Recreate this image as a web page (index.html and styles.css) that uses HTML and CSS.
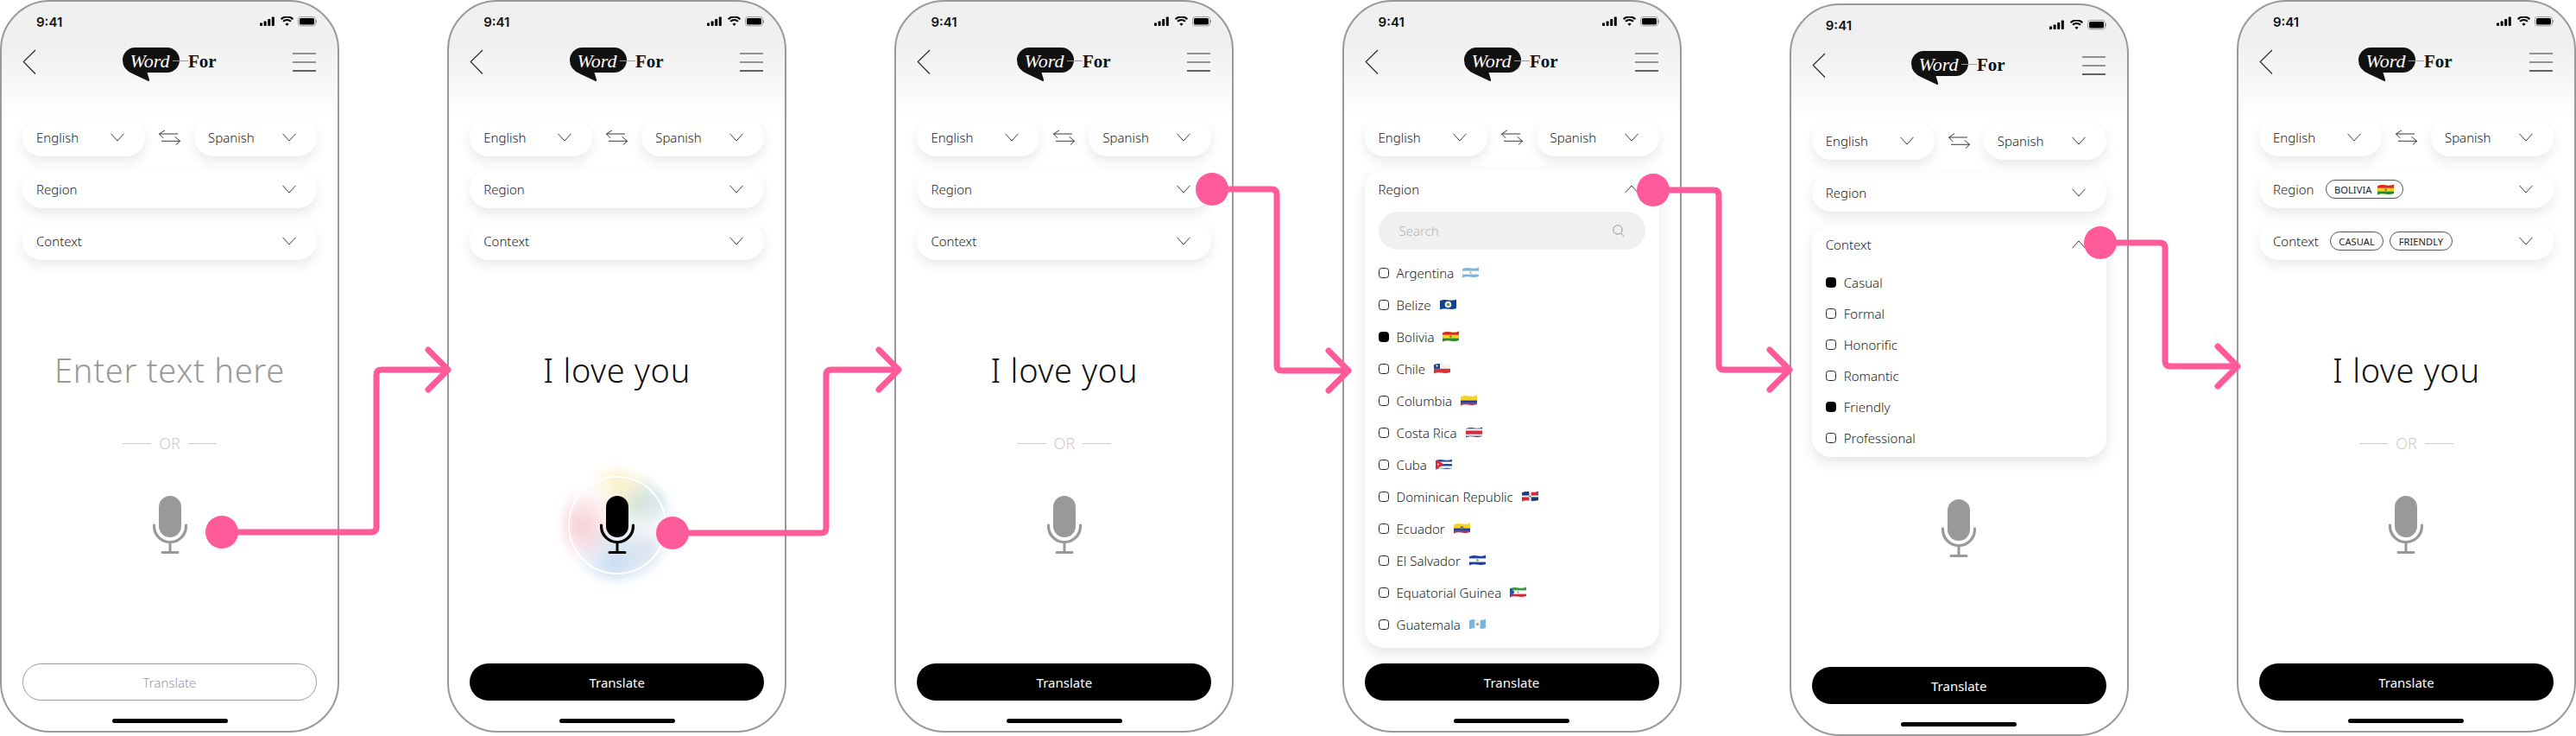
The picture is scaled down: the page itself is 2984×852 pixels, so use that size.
FILE: index.html
```html
<!DOCTYPE html>
<html lang="en">
<head>
  <meta charset="UTF-8" />
  <title>WordFor - translate flow</title>
  <link rel="stylesheet" href="styles.css">
</head>
<body>
  <!-- shared icons -->
  <svg class="sprite" width="0" height="0">
    <defs>
      <clipPath id="wave"><path d="M0 2.2Q5 .2 10 1.4T19 .6V11Q14 12.6 9 11.6T0 12.4Z"/></clipPath>
      <symbol id="status" viewBox="0 0 66 12">
        <rect x="0" y="7.5" width="3" height="3.5" rx=".7"/><rect x="4.600" y="5.500" width="3" height="5.500" rx=".7"/><rect x="9.200" y="3" width="3" height="8" rx=".7"/><rect x="13.800" y=".5" width="3" height="10.500" rx=".7"/>
        <path d="M31.500 11l-2-2.300a3 3 0 0 1 4 0zM27.700 6.600l-1.400-1.500a7.700 7.700 0 0 1 10.400 0l-1.400 1.500a5.700 5.700 0 0 0-7.600 0zM25.400 4l-1.500-1.600a11 11 0 0 1 15.200 0l-1.500 1.600a8.900 8.900 0 0 0-12.200 0z"/>
        <rect x="44.500" y=".5" width="20" height="10.400" rx="3" fill="none" stroke="#999"/><rect x="46" y="2" width="17" height="7.400" rx="1.600"/><rect x="65" y="4" width="1" height="3.400" rx=".5" fill="#999"/>
      </symbol>
      <symbol id="back" viewBox="0 0 16 30"><path d="M15 1L1.200 14.500 15 28.500" fill="none" stroke="#222" stroke-width="1.100"/></symbol>
      <symbol id="menu" viewBox="0 0 27 22"><path d="M0 1h27M0 11h27" fill="none" stroke="#333" stroke-width="1"/><path d="M0 21h27" fill="none" stroke="#222" stroke-width="1.400"/></symbol>
      <symbol id="chevron" viewBox="0 0 16 10"><path d="M.5 .8L8 9 15.500 .8" fill="none" stroke="#222" stroke-width=".9"/></symbol>
      <symbol id="chevron-up" viewBox="0 0 16 10"><path d="M.5 9.200L8 1 15.500 9.200" fill="none" stroke="#222" stroke-width=".9"/></symbol>
      <symbol id="swap" viewBox="0 0 27 18"><path d="M23 5H1.500M8 .8L1.500 5 6 9.800M4 13.300H25.500M19.500 8.200l6 5.100-4.500 4.200" fill="none" stroke="#222" stroke-width=".9"/></symbol>
      <symbol id="search" viewBox="0 0 14 15"><circle cx="6" cy="6" r="5.200" fill="none" stroke="#999"/><path d="M9.800 10L13.400 14" fill="none" stroke="#999"/></symbol>
      <symbol id="mic" viewBox="0 0 40 68">
        <rect x="7" y="0" width="26" height="48" rx="13"/>
        <path d="M1.500 35a18.500 18.500 0 0 0 37 0" fill="none" stroke="currentColor" stroke-width="3.200" stroke-linecap="round"/>
        <path d="M1.500 35v-1M38.500 35v-1" stroke="currentColor" stroke-width="3.200" stroke-linecap="round"/>
        <path d="M20 54v11M11 65.500h18" fill="none" stroke="currentColor" stroke-width="3" stroke-linecap="round"/>
      </symbol>
      <symbol id="logo" viewBox="0 0 110 41">
        <path fill="#111" d="M14.500 0H51.500a14.500 14.500 0 0 1 0 29H28.500l2.600 8.500q.3 2-1.600 1.200L12 30.400Q0 25.500 0 14.500A14.500 14.500 0 0 1 14.500 0Z"/>
        <path d="M58 15.500H76" stroke="#999" stroke-width="1"/>
        <text x="8.500" y="22.500" class="logo-word">Word</text>
        <text x="76" y="22.500" class="logo-for">For</text>
      </symbol>
      <symbol id="ar" viewBox="0 0 19 13"><g clip-path="url(#wave)"><rect width="19" height="13" fill="#fff"/><rect width="19" height="4.600" fill="#7db4e0"/><rect y="8.600" width="19" height="4.400" fill="#7db4e0"/><circle cx="9.500" cy="6.500" r="1.300" fill="#f0b040"/></g></symbol>
      <symbol id="bz" viewBox="0 0 19 13"><g clip-path="url(#wave)"><rect width="19" height="13" fill="#c8202c"/><rect y="1.400" width="19" height="10.200" fill="#12428e"/><circle cx="9.500" cy="6.500" r="3.800" fill="#e4efe4"/><circle cx="9.500" cy="6.500" r="1.800" fill="#6f9a5a"/></g></symbol>
      <symbol id="bo" viewBox="0 0 19 13"><g clip-path="url(#wave)"><rect width="19" height="13" fill="#f4d21f"/><rect width="19" height="4.600" fill="#d8262c"/><rect y="8.600" width="19" height="4.400" fill="#1f8a3c"/><circle cx="9.500" cy="6.500" r="1.200" fill="#6c7a2c"/></g></symbol>
      <symbol id="cl" viewBox="0 0 19 13"><g clip-path="url(#wave)"><rect width="19" height="13" fill="#f4f4f4"/><rect y="6.800" width="19" height="6.200" fill="#d8323a"/><rect width="7" height="6.800" fill="#1c3f94"/><circle cx="3.500" cy="3.600" r="1.100" fill="#fff"/></g></symbol>
      <symbol id="co" viewBox="0 0 19 13"><g clip-path="url(#wave)"><rect width="19" height="6.500" fill="#f6d32a"/><rect y="6.500" width="19" height="3.300" fill="#24409a"/><rect y="9.800" width="19" height="3.200" fill="#c8283a"/></g></symbol>
      <symbol id="cr" viewBox="0 0 19 13"><g clip-path="url(#wave)"><rect width="19" height="13" fill="#fff"/><rect width="19" height="2.400" fill="#1e3f94"/><rect y="4.500" width="19" height="4.200" fill="#d8283a"/><rect y="10.600" width="19" height="2.400" fill="#1e3f94"/></g></symbol>
      <symbol id="cu" viewBox="0 0 19 13"><g clip-path="url(#wave)"><rect width="19" height="13" fill="#fff"/><rect y="1" width="19" height="2.600" fill="#1f4ba8"/><rect y="6" width="19" height="2.500" fill="#1f4ba8"/><rect y="10.800" width="19" height="2.200" fill="#1f4ba8"/><path d="M0 0L9.500 6.500 0 13Z" fill="#d8283a"/><circle cx="3" cy="6.500" r="1" fill="#fff"/></g></symbol>
      <symbol id="do" viewBox="0 0 19 13"><g clip-path="url(#wave)"><rect width="19" height="13" fill="#fff"/><rect width="8.400" height="5.600" fill="#1a3a78"/><rect x="10.600" width="8.400" height="5.600" fill="#cf2a3c"/><rect y="7.400" width="8.400" height="5.600" fill="#cf2a3c"/><rect x="10.600" y="7.400" width="8.400" height="5.600" fill="#1a3a78"/><circle cx="9.500" cy="6.500" r="1" fill="#3d6a4a"/></g></symbol>
      <symbol id="ec" viewBox="0 0 19 13"><g clip-path="url(#wave)"><rect width="19" height="6.500" fill="#f6d32a"/><rect y="6.500" width="19" height="3.300" fill="#24409a"/><rect y="9.800" width="19" height="3.200" fill="#c8283a"/><circle cx="9.500" cy="6" r="2" fill="#6a7a5a"/></g></symbol>
      <symbol id="sv" viewBox="0 0 19 13"><g clip-path="url(#wave)"><rect width="19" height="13" fill="#fff"/><rect width="19" height="4.400" fill="#1c3fa0"/><rect y="8.600" width="19" height="4.400" fill="#1c3fa0"/><circle cx="9.500" cy="6.500" r="1.200" fill="#7a9a50"/></g></symbol>
      <symbol id="gq" viewBox="0 0 19 13"><g clip-path="url(#wave)"><rect width="19" height="13" fill="#fff"/><rect width="19" height="4.400" fill="#3a9a3c"/><rect y="8.600" width="19" height="4.400" fill="#d8283a"/><path d="M0 0L5.500 6.500 0 13Z" fill="#1c58b0"/><circle cx="9.500" cy="6.500" r="1" fill="#8a9a70"/></g></symbol>
      <symbol id="gt" viewBox="0 0 19 13"><g clip-path="url(#wave)"><rect width="19" height="13" fill="#f4f6f4"/><rect width="6.300" height="13" fill="#7db4dc"/><rect x="12.700" width="6.300" height="13" fill="#7db4dc"/><circle cx="9.500" cy="6.500" r="1.500" fill="#88a870"/></g></symbol>
    </defs>
  </svg>

  <div class="board">

    <!-- 1: empty -->
    <section class="phone">
      <div class="status"><span class="time">9:41</span><svg class="status-icons"><use href="#status"/></svg></div>
      <div class="nav">
        <svg class="icon-back"><use href="#back"/></svg>
        <svg class="logo"><use href="#logo"/></svg>
        <svg class="icon-menu"><use href="#menu"/></svg>
      </div>
      <div class="lang-row">
        <div class="pill"><span>English</span><svg class="chevron"><use href="#chevron"/></svg></div>
        <svg class="swap"><use href="#swap"/></svg>
        <div class="pill"><span>Spanish</span><svg class="chevron"><use href="#chevron"/></svg></div>
      </div>
      <div class="pill"><span>Region</span><svg class="chevron"><use href="#chevron"/></svg></div>
      <div class="pill"><span>Context</span><svg class="chevron"><use href="#chevron"/></svg></div>
      <div class="phrase phrase-empty">Enter text here</div>
      <div class="or"><i></i><span>OR</span><i></i></div>
      <div class="mic"><svg class="mic-icon"><use href="#mic"/></svg></div>
      <div class="translate translate-off">Translate</div>
      <div class="home"></div>
    </section>

    <!-- 2: listening -->
    <section class="phone">
      <div class="status"><span class="time">9:41</span><svg class="status-icons"><use href="#status"/></svg></div>
      <div class="nav">
        <svg class="icon-back"><use href="#back"/></svg>
        <svg class="logo"><use href="#logo"/></svg>
        <svg class="icon-menu"><use href="#menu"/></svg>
      </div>
      <div class="lang-row">
        <div class="pill"><span>English</span><svg class="chevron"><use href="#chevron"/></svg></div>
        <svg class="swap"><use href="#swap"/></svg>
        <div class="pill"><span>Spanish</span><svg class="chevron"><use href="#chevron"/></svg></div>
      </div>
      <div class="pill"><span>Region</span><svg class="chevron"><use href="#chevron"/></svg></div>
      <div class="pill"><span>Context</span><svg class="chevron"><use href="#chevron"/></svg></div>
      <div class="phrase">I love you</div>
      <div class="or or-hidden"><i></i><span>OR</span><i></i></div>
      <div class="mic mic-on">
        <div class="mic-glow"></div>
        <div class="mic-ring"></div>
        <svg class="mic-icon"><use href="#mic"/></svg>
      </div>
      <div class="translate">Translate</div>
      <div class="home"></div>
    </section>

    <!-- 3: text entered -->
    <section class="phone">
      <div class="status"><span class="time">9:41</span><svg class="status-icons"><use href="#status"/></svg></div>
      <div class="nav">
        <svg class="icon-back"><use href="#back"/></svg>
        <svg class="logo"><use href="#logo"/></svg>
        <svg class="icon-menu"><use href="#menu"/></svg>
      </div>
      <div class="lang-row">
        <div class="pill"><span>English</span><svg class="chevron"><use href="#chevron"/></svg></div>
        <svg class="swap"><use href="#swap"/></svg>
        <div class="pill"><span>Spanish</span><svg class="chevron"><use href="#chevron"/></svg></div>
      </div>
      <div class="pill"><span>Region</span><svg class="chevron"><use href="#chevron"/></svg></div>
      <div class="pill"><span>Context</span><svg class="chevron"><use href="#chevron"/></svg></div>
      <div class="phrase">I love you</div>
      <div class="or"><i></i><span>OR</span><i></i></div>
      <div class="mic"><svg class="mic-icon"><use href="#mic"/></svg></div>
      <div class="translate">Translate</div>
      <div class="home"></div>
    </section>

    <!-- 4: region open -->
    <section class="phone">
      <div class="status"><span class="time">9:41</span><svg class="status-icons"><use href="#status"/></svg></div>
      <div class="nav">
        <svg class="icon-back"><use href="#back"/></svg>
        <svg class="logo"><use href="#logo"/></svg>
        <svg class="icon-menu"><use href="#menu"/></svg>
      </div>
      <div class="lang-row">
        <div class="pill"><span>English</span><svg class="chevron"><use href="#chevron"/></svg></div>
        <svg class="swap"><use href="#swap"/></svg>
        <div class="pill"><span>Spanish</span><svg class="chevron"><use href="#chevron"/></svg></div>
      </div>
      <div class="card card-region">
        <div class="card-head"><span>Region</span><svg class="chevron"><use href="#chevron-up"/></svg></div>
        <div class="search"><span>Search</span><svg class="search-icon"><use href="#search"/></svg></div>
        <ul class="options">
          <li><b class="check"></b>Argentina<svg class="flag"><use href="#ar"/></svg></li>
          <li><b class="check"></b>Belize<svg class="flag"><use href="#bz"/></svg></li>
          <li><b class="check on"></b>Bolivia<svg class="flag"><use href="#bo"/></svg></li>
          <li><b class="check"></b>Chile<svg class="flag"><use href="#cl"/></svg></li>
          <li><b class="check"></b>Columbia<svg class="flag"><use href="#co"/></svg></li>
          <li><b class="check"></b>Costa Rica<svg class="flag"><use href="#cr"/></svg></li>
          <li><b class="check"></b>Cuba<svg class="flag"><use href="#cu"/></svg></li>
          <li><b class="check"></b>Dominican Republic<svg class="flag"><use href="#do"/></svg></li>
          <li><b class="check"></b>Ecuador<svg class="flag"><use href="#ec"/></svg></li>
          <li><b class="check"></b>El Salvador<svg class="flag"><use href="#sv"/></svg></li>
          <li><b class="check"></b>Equatorial Guinea<svg class="flag"><use href="#gq"/></svg></li>
          <li><b class="check"></b>Guatemala<svg class="flag"><use href="#gt"/></svg></li>
        </ul>
      </div>
      <div class="translate">Translate</div>
      <div class="home"></div>
    </section>

    <!-- 5: context open -->
    <section class="phone phone-low">
      <div class="status"><span class="time">9:41</span><svg class="status-icons"><use href="#status"/></svg></div>
      <div class="nav">
        <svg class="icon-back"><use href="#back"/></svg>
        <svg class="logo"><use href="#logo"/></svg>
        <svg class="icon-menu"><use href="#menu"/></svg>
      </div>
      <div class="lang-row">
        <div class="pill"><span>English</span><svg class="chevron"><use href="#chevron"/></svg></div>
        <svg class="swap"><use href="#swap"/></svg>
        <div class="pill"><span>Spanish</span><svg class="chevron"><use href="#chevron"/></svg></div>
      </div>
      <div class="pill"><span>Region</span><svg class="chevron"><use href="#chevron"/></svg></div>
      <div class="card card-context">
        <div class="card-head"><span>Context</span><svg class="chevron"><use href="#chevron-up"/></svg></div>
        <ul class="options">
          <li><b class="check on"></b>Casual</li>
          <li><b class="check"></b>Formal</li>
          <li><b class="check"></b>Honorific</li>
          <li><b class="check"></b>Romantic</li>
          <li><b class="check on"></b>Friendly</li>
          <li><b class="check"></b>Professional</li>
        </ul>
      </div>
      <div class="mic"><svg class="mic-icon"><use href="#mic"/></svg></div>
      <div class="translate">Translate</div>
      <div class="home"></div>
    </section>

    <!-- 6: filters chosen -->
    <section class="phone">
      <div class="status"><span class="time">9:41</span><svg class="status-icons"><use href="#status"/></svg></div>
      <div class="nav">
        <svg class="icon-back"><use href="#back"/></svg>
        <svg class="logo"><use href="#logo"/></svg>
        <svg class="icon-menu"><use href="#menu"/></svg>
      </div>
      <div class="lang-row">
        <div class="pill"><span>English</span><svg class="chevron"><use href="#chevron"/></svg></div>
        <svg class="swap"><use href="#swap"/></svg>
        <div class="pill"><span>Spanish</span><svg class="chevron"><use href="#chevron"/></svg></div>
      </div>
      <div class="pill"><span>Region<em class="chip">BOLIVIA<svg class="flag"><use href="#bo"/></svg></em></span><svg class="chevron"><use href="#chevron"/></svg></div>
      <div class="pill"><span>Context<em class="chip">CASUAL</em><em class="chip">FRIENDLY</em></span><svg class="chevron"><use href="#chevron"/></svg></div>
      <div class="phrase">I love you</div>
      <div class="or"><i></i><span>OR</span><i></i></div>
      <div class="mic"><svg class="mic-icon"><use href="#mic"/></svg></div>
      <div class="translate">Translate</div>
      <div class="home"></div>
    </section>

    <!-- pink flow arrows sit on top of the phones -->
    <svg class="flow" width="2984" height="852" viewBox="0 0 2984 852">
      <g class="flow-line">
        <path d="M257 616H430q6 0 6-6V434q0-6 6-6H519M496 405l23 23-23 23"/>
        <path d="M779 617H951q6 0 6-6V434q0-6 6-6H1041M1018 405l23 23-23 23"/>
        <path d="M1404 219H1473q6 0 6 6V423q0 6 6 6H1562M1539 406l23 23-23 23"/>
        <path d="M1915 220H1985q6 0 6 6V422q0 6 6 6H2073M2050 405l23 23-23 23"/>
        <path d="M2433 281H2502q6 0 6 6V418q0 6 6 6H2592M2569 401l23 23-23 23"/>
      </g>
      <g class="flow-dot">
        <circle cx="257" cy="616" r="19"/>
        <circle cx="779" cy="617" r="19"/>
        <circle cx="1404" cy="219" r="19"/>
        <circle cx="1915" cy="220" r="19"/>
        <circle cx="2433" cy="281" r="19"/>
      </g>
    </svg>
  </div>
</body>
</html>
```

FILE: styles.css
```css
* {
  margin: 0;
  padding: 0;
  box-sizing: border-box;
}
html, body {
  height: 100%;
  overflow: hidden;
  background: #fff;
  font-family: 'Noto Sans', 'Open Sans', sans-serif;
  font-weight: 300;
  color: #222;
}
.sprite {
  display: block;
  height: 0;
}
.board {
  position: relative;
  width: 2984px;
  height: 852px;
  display: flex;
  justify-content: space-between;
  align-items: flex-start;
}
.phone {
  width: 393px;
  height: 848px;
  border: 2px solid #999;
  border-radius: 58px;
  padding: 0 24px;
  display: flex;
  flex-direction: column;
  background: linear-gradient(#f0f0f0 0, #f0f0f0 50px, #fff 135px);
}
.phone-low {
  margin-top: 4px;
}

/* top of the phone */
.status {
  height: 46px;
  padding: 0 0 0 16px;
  display: flex;
  justify-content: space-between;
  align-items: center;
}
.time {
  font-family: Inter, sans-serif;
  font-size: 15px;
  font-weight: 600;
  color: #111;
}
.status-icons {
  width: 66px;
  height: 12px;
}
.nav {
  height: 46px;
  margin-bottom: 43px;
  display: grid;
  grid-template-columns: 1fr auto 1fr;
  align-items: center;
}
.icon-back {
  width: 16px;
  height: 30px;
}
.logo {
  width: 110px;
  height: 41px;
  margin-top: 7px;
}
.logo-word {
  font-family: 'Liberation Serif', serif;
  font-style: italic;
  font-size: 22px;
  fill: #fff;
}
.logo-for {
  font-family: 'Liberation Serif', serif;
  font-weight: 700;
  font-size: 21px;
  fill: #111;
}
.icon-menu {
  width: 27px;
  height: 22px;
  justify-self: end;
  margin-right: 1px;
}

/* dropdowns */
.lang-row {
  display: flex;
  justify-content: space-between;
  align-items: center;
  margin-bottom: 16px;
}
.lang-row .pill {
  width: 142px;
  margin-bottom: 0;
}
.swap {
  width: 27px;
  height: 18px;
}
.pill {
  height: 44px;
  padding: 0 24px 0 16px;
  margin-bottom: 16px;
  background: #fff;
  border-radius: 22px;
  box-shadow: 0 6px 14px rgba(0, 0, 0, 0.09);
  display: flex;
  justify-content: space-between;
  align-items: center;
  flex: none;
  font-size: 15px;
}
.pill > span {
  display: flex;
  align-items: center;
}
.chevron {
  width: 16px;
  height: 10px;
  flex: none;
}
.chip {
  height: 22px;
  margin-left: 7px;
  padding: 0 9.500px;
  border: 1px solid #555;
  border-radius: 11px;
  display: inline-flex;
  align-items: center;
  font-style: normal;
  font-size: 11.200px;
  font-weight: 400;
  color: #222;
}
.pill > span > .chip:first-child {
  margin-left: 13px;
}
.chip .flag {
  margin-left: 7px;
}

/* open dropdown */
.card {
  background: #fff;
  border-radius: 22px;
  box-shadow: 0 6px 16px rgba(0, 0, 0, 0.11);
  padding: 0 16px;
  flex: none;
}
.card-region {
  height: 553px;
}
.card-context {
  height: 268px;
}
.card-head {
  height: 44px;
  padding-right: 8px;
  display: flex;
  justify-content: space-between;
  align-items: center;
  font-size: 15px;
}
.search {
  height: 44px;
  margin: 4px 0 8px;
  padding: 0 24px;
  background: #f0f0f0;
  border-radius: 22px;
  display: flex;
  justify-content: space-between;
  align-items: center;
  font-size: 15px;
  color: #b5b5b5;
}
.search-icon {
  width: 14px;
  height: 15px;
}
.options {
  list-style: none;
  font-size: 15px;
}
.options li {
  height: 37px;
  display: flex;
  align-items: center;
}
.card-context .options {
  margin-top: 4px;
}
.card-context .options li {
  height: 36px;
}
.check {
  width: 12px;
  height: 12px;
  margin-right: 9px;
  border: 1.300px solid #222;
  border-radius: 3.500px;
  flex: none;
}
.check.on {
  background: #000;
  border-color: #000;
}
.flag {
  width: 19px;
  height: 13px;
  margin-left: 10px;
  flex: none;
}

/* middle of the phone */
.phrase {
  margin-top: 86px;
  height: 50px;
  line-height: 50px;
  text-align: center;
  font-size: 38px;
  font-weight: 350;
  letter-spacing: 0.700px;
  color: #111;
}
.phrase-empty {
  color: #999;
}
.or {
  height: 24px;
  margin-top: 48px;
  display: flex;
  justify-content: center;
  align-items: center;
  gap: 9px;
  font-size: 18px;
  color: #ccc;
}
.or i {
  width: 33px;
  height: 1px;
  background: #ccc;
}
.or-hidden {
  visibility: hidden;
}
.mic {
  position: relative;
  width: 40px;
  height: 68px;
  margin: 49px auto 0;
  color: #999;
  fill: #999;
  flex: none;
}
.mic-icon {
  position: relative;
  display: block;
  width: 40px;
  height: 68px;
}
.mic-on {
  color: #000;
  fill: #000;
}
.mic-glow {
  position: absolute;
  left: -44px;
  top: -30px;
  width: 128px;
  height: 128px;
  border-radius: 50%;
  filter: blur(5px);
  background:
    radial-gradient(circle at 18% 50%, rgba(246, 196, 204, 0.85) 0, rgba(246, 196, 204, 0) 36%),
    radial-gradient(circle at 52% 10%, rgba(252, 236, 190, 0.85) 0, rgba(252, 236, 190, 0) 28%),
    radial-gradient(circle at 68% 30%, rgba(200, 222, 208, 0.85) 0, rgba(200, 222, 208, 0) 28%),
    radial-gradient(circle at 48% 84%, rgba(196, 218, 240, 0.95) 0, rgba(196, 218, 240, 0) 40%),
    radial-gradient(circle at 88% 26%, rgba(200, 222, 240, 0.7) 0, rgba(200, 222, 240, 0) 24%),
    radial-gradient(circle at 76% 72%, rgba(210, 216, 232, 0.7) 0, rgba(210, 216, 232, 0) 28%),
    #fff;
}
.mic-ring {
  position: absolute;
  left: -37px;
  top: -23px;
  width: 114px;
  height: 114px;
  border: 2px solid #fff;
  border-radius: 50%;
}

/* bottom of the phone */
.translate {
  height: 43px;
  margin-top: auto;
  background: #000;
  border-radius: 22px;
  display: flex;
  justify-content: center;
  align-items: center;
  font-size: 15px;
  font-weight: 400;
  color: #fff;
  flex: none;
}
.translate-off {
  background: #fff;
  border: 1px solid #999;
  color: #999;
  font-weight: 300;
}
.home {
  width: 134px;
  height: 5px;
  margin: 21px auto 9px;
  background: #000;
  border-radius: 3px;
  flex: none;
}

/* flow overlay */
.flow {
  position: absolute;
  left: 0;
  top: 0;
  pointer-events: none;
}
.flow-line path {
  fill: none;
  stroke: #ff5a9a;
  stroke-width: 7;
  stroke-linecap: round;
  stroke-linejoin: round;
}
.flow-dot circle {
  fill: #ff5a9a;
}
```
